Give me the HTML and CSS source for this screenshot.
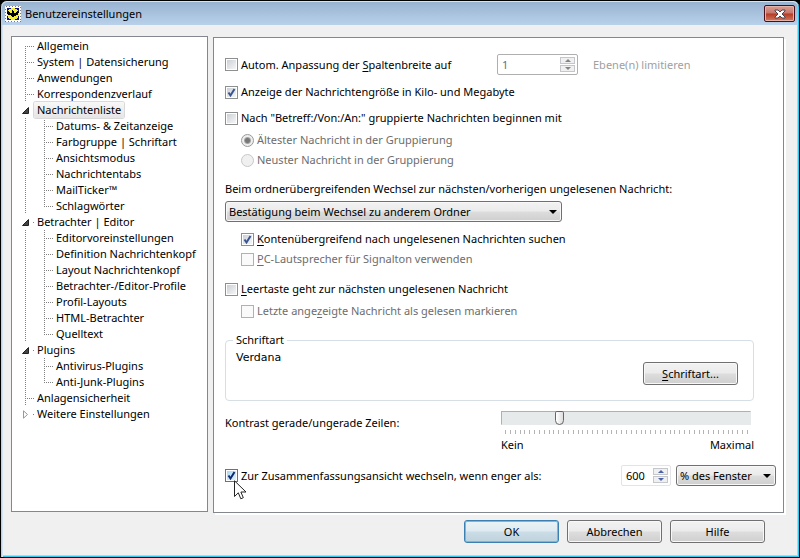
FILE: index.html
```html
<!DOCTYPE html>
<html lang="de">
<head>
<meta charset="utf-8">
<title>Benutzereinstellungen</title>
<link rel="stylesheet" href="styles.css">
</head>
<body>
<div class="window">
  <header class="titlebar">
    <svg class="app-icon" viewBox="0 0 16 16" width="16" height="16" shape-rendering="crispEdges" aria-hidden="true">
      <rect width="16" height="16" fill="#fff"/>
      <rect x=".5" y=".5" width="15" height="15" fill="none" stroke="#777" stroke-dasharray="1 2"/>
      <rect x="2" y="2" width="12" height="12" fill="#10107c"/>
      <circle cx="8" cy="8" r="6" fill="#f4ef35"/>
      <path d="M2 6L4 5L5 7L7 7L7 4L8 5L9 4L9 7L11 7L12 5L14 6L13 9L11 9L10 10L9 10L8 12L7 10L6 10L5 9L3 9Z" fill="#000"/>
    </svg>
    <h1>Benutzereinstellungen</h1>
    <button class="close" type="button" aria-label="Schließen">
      <svg viewBox="0 0 12 10" width="12" height="10" aria-hidden="true"><path d="M1 1H4L6 3L8 1H11V2L8 5L11 8V9H8L6 7L4 9H1V8L4 5L1 2Z" fill="#fff" stroke="#4c4550"/></svg>
    </button>
  </header>

  <main class="content">
    <nav class="tree" aria-label="Kategorien">
      <ul>
        <li><a class="leaf first" href="#">Allgemein</a></li>
        <li><a class="leaf" href="#">System | Datensicherung</a></li>
        <li><a class="leaf" href="#">Anwendungen</a></li>
        <li><a class="leaf" href="#">Korrespondenzverlauf</a></li>
        <li><a class="node selected" href="#"><svg class="mark" viewBox="0 0 7 7" aria-hidden="true"><path d="M.5 6.500H6.500V.5Z" fill="#444" stroke="#222"/></svg><span>Nachrichtenliste</span></a>
          <ul>
            <li><a class="leaf" href="#">Datums- &amp; Zeitanzeige</a></li>
            <li><a class="leaf" href="#">Farbgruppe | Schriftart</a></li>
            <li><a class="leaf" href="#">Ansichtsmodus</a></li>
            <li><a class="leaf" href="#">Nachrichtentabs</a></li>
            <li><a class="leaf" href="#">MailTicker™</a></li>
            <li><a class="leaf last" href="#">Schlagwörter</a></li>
          </ul>
        </li>
        <li><a class="node" href="#"><svg class="mark" viewBox="0 0 7 7" aria-hidden="true"><path d="M.5 6.500H6.500V.5Z" fill="#444" stroke="#222"/></svg><span>Betrachter | Editor</span></a>
          <ul>
            <li><a class="leaf" href="#">Editorvoreinstellungen</a></li>
            <li><a class="leaf" href="#">Definition Nachrichtenkopf</a></li>
            <li><a class="leaf" href="#">Layout Nachrichtenkopf</a></li>
            <li><a class="leaf" href="#">Betrachter-/Editor-Profile</a></li>
            <li><a class="leaf" href="#">Profil-Layouts</a></li>
            <li><a class="leaf" href="#">HTML-Betrachter</a></li>
            <li><a class="leaf last" href="#">Quelltext</a></li>
          </ul>
        </li>
        <li><a class="node" href="#"><svg class="mark" viewBox="0 0 7 7" aria-hidden="true"><path d="M.5 6.500H6.500V.5Z" fill="#444" stroke="#222"/></svg><span>Plugins</span></a>
          <ul>
            <li><a class="leaf" href="#">Antivirus-Plugins</a></li>
            <li><a class="leaf last" href="#">Anti-Junk-Plugins</a></li>
          </ul>
        </li>
        <li><a class="leaf" href="#">Anlagensicherheit</a></li>
        <li><a class="node" href="#"><svg class="mark" viewBox="0 0 7 9" aria-hidden="true"><path d="M1.500 .8V8.200L5.500 4.500Z" fill="#fff" stroke="#999"/></svg><span>Weitere Einstellungen</span></a></li>
      </ul>
    </nav>

    <form class="panel">
      <div class="row first-row">
        <label class="check auto-label"><input type="checkbox"><span>Autom. Anpassung der <u>S</u>paltenbreite auf</span></label>
        <div class="spin wide disabled">
          <input type="text" value="1" id="levels" disabled>
          <span class="steps"><button type="button" disabled aria-label="Mehr"></button><button class="down" type="button" disabled aria-label="Weniger"></button></span>
        </div>
        <label class="levels-label" for="levels">Ebene(n) limitieren</label>
      </div>
      <label class="check gap-m"><input type="checkbox" checked><span>Anzeige der Nachrichtengröße in Kilo- und Megabyte</span></label>
      <label class="check gap-m"><input type="checkbox"><span>Nach "Betreff:/Von:/An:" gruppierte Nachrichten beginnen mit</span></label>
      <label class="check indent gap-s muted"><input type="radio" name="order" checked disabled><span>Ältester Nachricht in der Gruppierung</span></label>
      <label class="check indent gap-xs muted"><input type="radio" name="order" disabled><span>Neuster Nachricht in der Gruppierung</span></label>

      <label class="text gap-l" for="switch">Beim ordnerübergreifenden Wechsel zur nächsten/vorherigen ungelesenen Nachricht:</label>
      <div class="select folder gap-s"><select id="switch"><option>Bestätigung beim Wechsel zu anderem Ordner</option></select></div>
      <label class="check indent gap-m"><input type="checkbox" checked><span><u>K</u>ontenübergreifend nach ungelesenen Nachrichten suchen</span></label>
      <label class="check indent gap-xs muted"><input type="checkbox" disabled><span><u>P</u>C-Lautsprecher für Signalton verwenden</span></label>

      <label class="check gap-l"><input type="checkbox"><span><u>L</u>eertaste geht zur nächsten ungelesenen Nachricht</span></label>
      <label class="check indent gap-s muted"><input type="checkbox" disabled><span>Letzte ange<u>z</u>eigte Nachricht als gelesen markieren</span></label>

      <fieldset class="font-box gap-l">
        <legend>Schriftart</legend>
        <p class="font-name">Verdana</p>
        <button class="btn" type="button"><span><u>S</u>chriftart...</span></button>
      </fieldset>

      <div class="row contrast">
        <label for="contrast">Kontrast gerade/ungerade Zeilen:</label>
        <div class="slider">
          <input type="range" id="contrast" min="0" max="50" value="11">
          <div class="ticks"></div>
          <div class="scale"><span>Kein</span><span>Maximal</span></div>
        </div>
      </div>

      <div class="row summary">
        <label class="check hover"><input type="checkbox" checked><span>Zur Zusammenfassungsansicht wechseln, wenn enger als:</span>
          <svg class="pointer" viewBox="0 0 13 20" width="13" height="20" aria-hidden="true"><path d="M.5 .8V16.500L4.300 12.800L6.800 18.800L9.300 17.700L6.900 12H12Z" fill="#fff" stroke="#222"/></svg>
        </label>
        <div class="spin">
          <input type="text" value="600" aria-label="Breite">
          <span class="steps"><button type="button" aria-label="Mehr"></button><button class="down" type="button" aria-label="Weniger"></button></span>
        </div>
        <div class="select unit"><select aria-label="Einheit"><option>% des Fenster</option></select></div>
      </div>
    </form>
  </main>

  <footer class="actions">
    <button class="btn default" type="button">OK</button>
    <button class="btn" type="button">Abbrechen</button>
    <button class="btn" type="button">Hilfe</button>
  </footer>
</div>
</body>
</html>
```
FILE: styles.css
```css
* { box-sizing: border-box; }

body {
  margin: 0;
  background: #000;
  font: 11px/16px "Noto Sans", "Open Sans", sans-serif;
  color: #000;
}

button, input, select { font: inherit; color: inherit; margin: 0; }
ul { list-style: none; margin: 0; padding: 0; }
a { color: inherit; text-decoration: none; }
u { text-underline-offset: 2px; }

.window {
  display: flex;
  flex-direction: column;
  min-height: 100vh;
  border: 1px solid #000;
  border-radius: 7px 7px 0 0;
  background: #f0f0f0;
  box-shadow: inset 1px 0 #b9d1ea, inset 2px 0 #d5e4f4, inset -1px -1px #30c8ec, inset -2px -2px #b9d1ea;
}

/* Title bar */
.titlebar {
  display: flex;
  align-items: center;
  height: 24px;
  margin: 0 1px;
  padding: 0 3px;
  border-top: 1px solid #d5e4f4;
  border-radius: 6px 6px 0 0;
  background: linear-gradient(#98b3d1, #b9d1ea);
}
.titlebar h1 {
  flex: 1;
  margin: 0 0 0 4px;
  font-size: 11px;
  font-weight: 400;
}
.close {
  display: grid;
  place-items: center;
  width: 31px;
  height: 17px;
  padding: 0;
  border: 1px solid #45101d;
  border-radius: 2px;
  background: linear-gradient(#dba096, #c9756a 48%, #b33a25 52%, #d27a5f);
  box-shadow: inset 0 0 0 1px #e6b3a8;
}

.content {
  display: flex;
  flex: 1;
  gap: 5px;
  padding: 11px 15px 0 10px;
}

/* Category tree */
.tree {
  width: 197px;
  padding: 1px 0 0 13px;
  border: 1px solid #828790;
  background: #fff;
}
.tree a { display: block; height: 16px; white-space: nowrap; }
.tree .leaf {
  padding-left: 12px;
  background:
    repeating-linear-gradient(#808080 0 1px, transparent 1px 2px) 0 0 / 1px 16px no-repeat,
    repeating-linear-gradient(90deg, #808080 0 1px, transparent 1px 2px) 0 8px / 9px 1px no-repeat;
}
.tree .first { background-position: 0 8px, 0 8px; }
.tree .last { background-size: 1px 9px, 9px 1px; }
.tree li li { padding-left: 19px; background: repeating-linear-gradient(#808080 0 1px, transparent 1px 2px) 0 0 / 1px 16px no-repeat; }
.tree .node {
  display: flex;
  align-items: center;
  margin-left: -3px;
  background: linear-gradient(#808080, #808080) 11px 8px / 1px 1px no-repeat;
}
.mark { width: 7px; height: 9px; margin-right: 5px; }
.node span { padding: 0 3px; }
.selected span {
  border-radius: 2px;
  background: linear-gradient(#f8f8f8, #e5e5e5);
  box-shadow: 0 0 0 1px #d9d9d9;
}

/* Settings panel */
.panel {
  flex: 1;
  padding: 16px 7px 20px 11px;
  border: 1px solid #828790;
  background: #fff;
  box-shadow: 2px 2px #fff;
  margin: 1px 0 -1px;
}
.row { display: flex; align-items: center; }
.check { display: flex; align-items: center; height: 18px; white-space: nowrap; }
.check input {
  flex: none;
  appearance: none;
  width: 13px;
  height: 13px;
  margin-right: 3px;
  border: 1px solid #8e8f8f;
  background: linear-gradient(135deg, #cbcfd5, #f6f6f6) content-box;
  padding: 1px;
}
.check input:checked {
  background:
    url("data:image/svg+xml,%3Csvg xmlns='http://www.w3.org/2000/svg' viewBox='0 0 11 11'%3E%3Cpath d='M2.500 5.500L4.500 8.500L8.500 2' fill='none' stroke='%23385592' stroke-width='2'/%3E%3C/svg%3E") center / 11px no-repeat,
    linear-gradient(135deg, #cbcfd5, #f6f6f6) content-box;
}
.check input:disabled { border-color: #b1b1b1; background: #fafafa; }
.check input[type="radio"] { border-radius: 50%; border-color: #c8c8c8; background: #f0f0f0; }
.check input[type="radio"]:checked {
  border-color: #999;
  background: radial-gradient(circle, #777 0 2px, #a5a5a5 3px, #eee 4px);
}
.check.hover input { border-color: #3c7fb1; }
.check.hover input:checked {
  background:
    url("data:image/svg+xml,%3Csvg xmlns='http://www.w3.org/2000/svg' viewBox='0 0 11 11'%3E%3Cpath d='M2.500 5.500L4.500 8.500L8.500 2' fill='none' stroke='%23102a70' stroke-width='2'/%3E%3C/svg%3E") center / 11px no-repeat,
    linear-gradient(135deg, #a9d8f4, #e4f4fc) content-box;
}
.hover { position: relative; }
.pointer { position: absolute; left: 9px; top: 13px; }
.indent { margin-left: 16px; }
.muted { color: #6d6d6d; }
.text { display: block; }
.gap-xs { margin-top: 2px; }
.gap-s { margin-top: 4px; }
.gap-m { margin-top: 8px; }
.gap-l { margin-top: 12px; }

.first-row { height: 21px; }
.auto-label { width: 272px; }
.levels-label { margin-left: 15px; color: #a0a0a0; }

/* Spin box */
.spin {
  display: flex;
  width: 50px;
  height: 21px;
  padding: 2px;
  border: 1px solid #e3e3e8;
  border-radius: 2px;
  background: #fff;
}
.spin.wide { width: 81px; }
.spin.disabled { border-color: #afafaf; color: #6d6d6d; }
.spin input { flex: 1; min-width: 0; padding: 0 2px; border: 0; background: none; }
.steps { display: flex; flex-direction: column; width: 15px; gap: 1px; }
.steps button {
  display: grid;
  place-items: center;
  flex: 1;
  padding: 0;
  border: 1px solid #c4c6cc;
  background: #f0f0f0;
}
.steps button::before {
  content: "";
  border: solid transparent;
  border-width: 0 3px 3px;
  border-bottom-color: #4a62a8;
}
.steps .down::before { border-width: 3px 3px 0; border-top-color: #4a62a8; }
.steps button:disabled::before { border-bottom-color: #838383; border-top-color: #838383; }

/* Drop-downs and buttons */
.select { position: relative; height: 21px; }
.select select {
  appearance: none;
  width: 100%;
  height: 100%;
  padding: 0 3px;
  border: 1px solid #707070;
  border-radius: 3px;
  background: linear-gradient(#f2f2f2, #ebebeb 49%, #dddddd 51%, #cfcfcf);
  box-shadow: inset 0 0 0 1px #f8f8f8;
}
.select::after {
  content: "";
  position: absolute;
  right: 5px;
  top: 9px;
  border: solid transparent;
  border-width: 4px 4px 0;
  border-top-color: #000;
}
.folder { width: 337px; }
.unit { width: 100px; margin-left: 5px; }

.btn {
  width: 95px;
  height: 23px;
  padding: 0;
  border: 1px solid #707070;
  border-radius: 3px;
  background: linear-gradient(#f2f2f2, #ebebeb 49%, #dddddd 51%, #cfcfcf);
  box-shadow: inset 0 0 0 1px #f8f8f8;
}
.default {
  border-color: #3c7fb1;
  background: linear-gradient(#eaf3f7, #deebf1 49%, #cbdde6 51%, #bfd3dd);
  box-shadow: inset 0 0 0 1px #3fd0f5;
}

/* Font group */
.font-box {
  display: flex;
  justify-content: space-between;
  align-items: flex-start;
  min-width: 0;
  height: 69px;
  margin-left: 0;
  margin-right: 22px;
  padding: 2px 15px 0 10px;
  border: 1px solid #d5dfe5;
  border-radius: 4px;
}
.font-box legend { margin-left: -3px; padding: 0 3px; }
.font-name { margin: 0; font-family: "DejaVu Sans", sans-serif; }
.font-box .btn { margin-top: 12px; }

/* Contrast slider */
.contrast { justify-content: space-between; align-items: flex-start; margin: 10px 22px 0 0; }
.contrast > label { margin-top: 4px; }
.slider { width: 253px; }
.slider input {
  display: block;
  appearance: none;
  width: 250px;
  height: 14px;
  border: 1px solid #e7eaea;
  border-top-color: #b0b0b0;
  border-left-color: #b0b0b0;
  background: #e7eaea;
}
.slider input::-webkit-slider-thumb {
  appearance: none;
  width: 9px;
  height: 14px;
  border: 1px solid #666;
  border-radius: 2px 2px 5px 5px;
  background: linear-gradient(90deg, #fff, #ddd);
}
.ticks {
  width: 243px;
  height: 4px;
  margin: 5px 0 3px 4px;
  border-right: 1px solid #b4b4b4;
  background: repeating-linear-gradient(90deg, #b4b4b4 0 1px, transparent 1px 2%);
}
.scale { display: flex; justify-content: space-between; }

.summary { margin-top: 12px; height: 21px; }
.summary .spin { margin-left: auto; }

.actions {
  display: flex;
  justify-content: flex-end;
  gap: 8px;
  padding: 8px 34px 14px;
}
```
